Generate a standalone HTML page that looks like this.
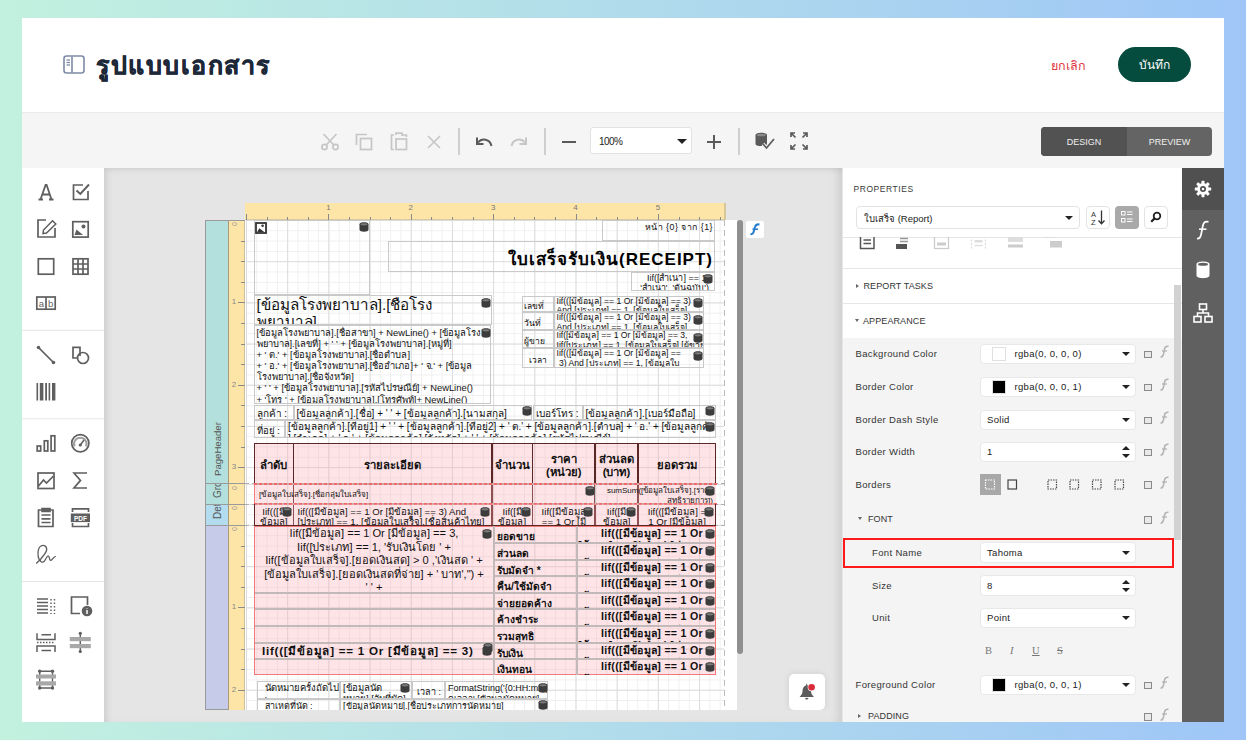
<!DOCTYPE html>
<html><head><meta charset="utf-8">
<style>
*{box-sizing:border-box;margin:0;padding:0}
html,body{width:1246px;height:740px;overflow:hidden}
body{font-family:"Liberation Sans",sans-serif;background:linear-gradient(90deg,#c2f1df 0%,#9fc6f7 100%);position:relative;color:#333}
.a{position:absolute}
.t{overflow:hidden;color:#111}
#card{left:22px;top:18px;width:1202px;height:704px;background:#fff;overflow:hidden}
#hdr{left:0;top:0;width:1202px;height:95px;background:#fff;border-bottom:1px solid #e9ecef}
#tb{left:0;top:95px;width:1202px;height:55px;background:#f5f5f5}
#tools{left:0;top:150px;width:82px;height:554px;background:#fff}
#surf{left:82px;top:150px;width:738px;height:554px;background:#e5e5e5;overflow:hidden}
#surfsh{left:0;top:0;width:738px;height:554px;box-shadow:inset 6px 4px 6px -3px rgba(0,0,0,.10), inset -8px 0 8px -4px rgba(0,0,0,.10);pointer-events:none}
#props{left:820px;top:150px;width:340px;height:554px;background:#fff}
#side{left:1160px;top:150px;width:42px;height:554px;background:#606060}
</style></head><body>
<div id="card" class="a">
  
  <div id="hdr" class="a">
    <svg class="a" style="left:41px;top:37px" width="22" height="19" viewBox="0 0 22 19"><rect x="1" y="1" width="20" height="17" rx="2.5" fill="none" stroke="#7d8ba6" stroke-width="1.6"/><line x1="9" y1="1.5" x2="9" y2="17.5" stroke="#7d8ba6" stroke-width="1.6"/><line x1="3.5" y1="5" x2="7" y2="5" stroke="#7d8ba6" stroke-width="1.3"/><line x1="3.5" y1="7.5" x2="7" y2="7.5" stroke="#7d8ba6" stroke-width="1.3"/><line x1="3.5" y1="10" x2="7" y2="10" stroke="#7d8ba6" stroke-width="1.3"/></svg>
    <div class="a" style="left:74px;top:27px;font-size:25px;font-weight:bold;color:#1d2939;letter-spacing:1.5px;-webkit-text-stroke:0.5px #1d2939">รูปแบบเอกสาร</div>
    <div class="a" style="left:1029px;top:38px;font-size:12.5px;color:#e0383e">ยกเลิก</div>
    <div class="a" style="left:1096px;top:29px;width:73px;height:35px;border-radius:18px;background:#054c3e;color:#fff;font-size:12px;text-align:center;line-height:36px">บันทึก</div>
  </div>
  
  <div id="tb" class="a">
    <svg class="a" style="left:299px;top:20px" width="18" height="18" viewBox="0 0 18 18" fill="none" stroke="#c6c6c6" stroke-width="1.7"><circle cx="3.5" cy="14" r="2.6"/><circle cx="14.5" cy="14" r="2.6"/><path d="M5.2 12 L15.5 1 M12.8 12 L2.5 1"/></svg>
    <svg class="a" style="left:333px;top:20px" width="18" height="18" viewBox="0 0 18 18" fill="none" stroke="#c6c6c6" stroke-width="1.7"><path d="M1.5 12 V1.5 H12"/><rect x="5.5" y="5.5" width="11" height="11"/></svg>
    <svg class="a" style="left:368px;top:18px" width="18" height="20" viewBox="0 0 18 20" fill="none" stroke="#c6c6c6" stroke-width="1.7"><path d="M4 4 H1.5 V18.5 H4"/><path d="M12 4 H16.5 V6"/><rect x="6" y="8" width="10.5" height="10.5"/><path d="M6 4 V2.2 H12 V5" /></svg>
    <svg class="a" style="left:405px;top:22px" width="14" height="14" viewBox="0 0 14 14" fill="none" stroke="#c6c6c6" stroke-width="1.6"><path d="M1 1 L13 13 M13 1 L1 13"/></svg>
    <div class="a" style="left:436px;top:15px;width:1.5px;height:27px;background:#cfcfcf"></div>
    <svg class="a" style="left:453px;top:23px" width="18" height="11" viewBox="0 0 18 11" fill="none" stroke="#5a5a5a" stroke-width="2"><path d="M16.5 10 C15 3 7 1.5 3 6.5"/><path d="M2 1.5 V8 H8.5" fill="none"/></svg>
    <svg class="a" style="left:488px;top:23px" width="18" height="11" viewBox="0 0 18 11" fill="none" stroke="#c6c6c6" stroke-width="2"><path d="M1.5 10 C3 3 11 1.5 15 6.5"/><path d="M16 1.5 V8 H9.5"/></svg>
    <div class="a" style="left:522px;top:15px;width:1.5px;height:27px;background:#cfcfcf"></div>
    <div class="a" style="left:540px;top:28px;width:14px;height:2px;background:#5a5a5a"></div>
    <div class="a" style="left:568px;top:14px;width:102px;height:27px;background:#fff;border:1px solid #e2e2e2;border-radius:3px"><div class="a" style="left:8px;top:8px;font-size:10px;color:#222;letter-spacing:-0.6px">100%</div><div class="a" style="left:86px;top:11px;width:0;height:0;border-left:5px solid transparent;border-right:5px solid transparent;border-top:5px solid #222"></div></div>
    <svg class="a" style="left:685px;top:22px" width="14" height="14" viewBox="0 0 14 14" fill="none" stroke="#5a5a5a" stroke-width="2"><path d="M7 0 V14 M0 7 H14"/></svg>
    <div class="a" style="left:716px;top:15px;width:1.5px;height:27px;background:#cfcfcf"></div>
    <svg class="a" style="left:733px;top:19px" width="20" height="18" viewBox="0 0 20 18"><path d="M0.5 3 C0.5 0 12 0 12 3 V12 C12 13.5 8 14 6 14 C3 14 0.5 13.5 0.5 12 Z" fill="#5a5a5a"/><ellipse cx="6.25" cy="3" rx="4.5" ry="1.3" fill="#8a8a8a"/><path d="M8 12 L11.5 16 L19 7" fill="none" stroke="#f4f4f4" stroke-width="3.5"/><path d="M8 12 L11.5 16 L19 7" fill="none" stroke="#5a5a5a" stroke-width="1.7"/></svg>
    <svg class="a" style="left:768px;top:19px" width="18" height="18" viewBox="0 0 18 18" fill="none" stroke="#5a5a5a" stroke-width="1.7"><path d="M1 5 V1 H5 M1 1 L5.5 5.5"/><path d="M13 1 H17 V5 M17 1 L12.5 5.5"/><path d="M1 13 V17 H5 M1 17 L5.5 12.5"/><path d="M17 13 V17 H13 M17 17 L12.5 12.5"/></svg>
    <div class="a" style="left:1019px;top:14px;width:171px;height:29px;border-radius:4px;background:#646464;overflow:hidden"><div class="a" style="left:0;top:0;width:86px;height:29px;background:#525252"></div><div class="a" style="left:0;top:10px;width:86px;text-align:center;font-size:9px;color:#f0f0f0">DESIGN</div><div class="a" style="left:86px;top:10px;width:85px;text-align:center;font-size:9px;color:#f0f0f0">PREVIEW</div></div>
  </div>
  
  <div id="tools" class="a">
   <svg class="a" style="left:0;top:0" width="82" height="554" viewBox="22 168 82 554">
    <g fill="none" stroke="#5f5f5f" stroke-width="1.7">
      <path d="M38.5 199.5 H43 M49 199.5 H53.5 M40.5 199.5 L45.6 185 L46.6 185 L51.5 199.5 M42.3 194.5 H49.8" stroke-width="1.8"/>
      <path d="M83 185 H73.5 V199.5 H88 V191" /><path d="M76.5 190.5 L80.3 194 L89 184.5" stroke-width="1.9"/>
      <path d="M46 220 H38 V237 H55 V228"/><path d="M52.5 220.8 L55.8 224 L46.5 233 L43 233.6 L43.5 230 Z" stroke-width="1.5"/>
      <rect x="72.8" y="221.7" width="15.4" height="15.4"/>
      <rect x="38.3" y="258.8" width="15.4" height="15.4"/>
      <rect x="73" y="258.8" width="15" height="15.4"/><path d="M78 259 V274 M83 259 V274 M73 264 H88 M73 269 H88"/>
      <rect x="36.8" y="297" width="18.4" height="12.2"/><path d="M46 297 V309.2"/>
      <path d="M38.5 347.5 L53.5 362.5"/>
      <path d="M80 356 V347.3 H73 V358 H77"/><circle cx="83" cy="358" r="5.5"/>
      <rect x="37.2" y="446" width="3.5" height="5"/><rect x="44.3" y="440.8" width="3.5" height="10.2"/><rect x="51.1" y="435.8" width="3.7" height="15.2"/>
      <circle cx="80.3" cy="443.2" r="8.6"/>
      <rect x="38" y="473" width="16" height="15.5"/><path d="M38.5 486 L43.5 480 L46.5 483 L53.5 476"/>
      <path d="M87 473 H74 L80.5 480.4 L74 488 H87"/>
      <path d="M41 510 H38.5 V526.5 H53 V510 H50.5"/><path d="M42 508.5 H50 V511.5 H42 Z" fill="#5f5f5f"/><path d="M41.5 515 H50.5 M41.5 518.8 H50.5 M41.5 522.5 H50.5"/>
      <path d="M72.5 512 V508.8 H88.5 V512 M72.5 523 V526.5 H88.5 V523"/>
      <path d="M36.2 563.5 L39.5 560.3 C37 556 37.5 548 41 546 C44 544.3 47.5 546.5 46.5 550.5 C45.8 553.5 42 557 40.5 559.5 C39.5 562 42.5 563.2 44.5 561 C46 559 47 555.5 48.3 555.8 C49.5 556 49.3 561 51 560.3 C52.5 559.8 53.5 556.5 55.8 556.3" stroke-width="1.3"/>
      <path d="M37 599 H48 M37 602.5 H48 M37 606 H48 M37 609.5 H48 M37 613 H48" stroke-width="1.3"/>
      <path d="M51 599 V614 M54.5 599 V614" stroke-dasharray="1.5 2" stroke-width="1.4"/>
      <path d="M80 613.5 H71.5 V597 H87.5 V605"/>
      <path d="M37 633.3 V639.6 H55 V633.3 M37 652 V646 H55 V652 M41.5 634.8 H51 M41.5 650.5 H51" stroke-width="1.5"/>
      <path d="M37 642.5 H55" stroke-dasharray="1.5 1.5" stroke-width="1.3"/>
      <path d="M80.3 633 V652" stroke-width="1.5"/>
      <path d="M39.7 671.2 H52.5 M39.7 688 H52.5 M39.7 671 V689 M52.5 671 V689" stroke-width="1.4"/>
    </g>
    <g fill="#5f5f5f">
      <path d="M74.5 235 L76.5 229.5 L83 235 Z"/><circle cx="83.5" cy="226.5" r="2"/>
      <text x="41.5" y="307" font-size="9.5" font-family="Liberation Sans" text-anchor="middle">a</text>
      <text x="50.6" y="307" font-size="9.5" font-family="Liberation Sans" text-anchor="middle">b</text>
      <circle cx="38.5" cy="347.5" r="1.8"/><circle cx="53.5" cy="362.5" r="1.8"/>
      <rect x="36.5" y="383" width="1.6" height="17.5"/><rect x="39.8" y="383" width="3.6" height="17.5"/><rect x="45.2" y="383" width="1.8" height="17.5"/><rect x="48.6" y="383" width="1.6" height="17.5"/><rect x="52" y="383" width="3.4" height="17.5"/>
      <rect x="70.8" y="513.5" width="19.2" height="8.6"/>
      <circle cx="87" cy="611" r="5.3"/>
      <rect x="69.8" y="637" width="21" height="4.2" fill="#a8a8a8"/><rect x="69.8" y="644" width="21" height="4.2" fill="#a8a8a8"/>
      <circle cx="80.3" cy="633.3" r="1.6"/><circle cx="80.3" cy="651.5" r="1.6"/>
      <rect x="36" y="674.5" width="20" height="4" fill="#a8a8a8"/><rect x="36" y="681.3" width="20" height="4.2" fill="#a8a8a8"/>
      <circle cx="39.7" cy="671.2" r="1.7"/><circle cx="52.5" cy="671.2" r="1.7"/><circle cx="39.7" cy="688" r="1.7"/><circle cx="52.5" cy="688" r="1.7"/>
    </g>
    <path d="M74.5 446.5 A6.3 6.3 0 1 1 86.1 446.5" fill="none" stroke="#a0a0a0" stroke-width="2"/>
    <path d="M80.3 445 L84 440" stroke="#5f5f5f" stroke-width="1.5"/><circle cx="80.3" cy="445" r="1.6" fill="#5f5f5f"/>
    <text x="80.4" y="520.6" font-size="6.5" font-weight="bold" font-family="Liberation Sans" text-anchor="middle" fill="#fff">PDF</text>
    <path d="M87 608.2 V608.8 M87 610 V614" stroke="#fff" stroke-width="1.5"/>
    <rect x="22" y="329.8" width="82" height="1" fill="#e4e4e4"/>
    <rect x="22" y="418.3" width="82" height="1" fill="#e4e4e4"/>
    <rect x="22" y="581" width="82" height="1" fill="#e4e4e4"/>
   </svg>
  </div>
  <div id="surf" class="a"><div class="a" style="left:-104px;top:-168px;width:840px;height:710px;overflow:hidden"><div class="a" style="left:245.0px;top:203.0px;width:481.0px;height:17.0px;background:#fde5a8;border-bottom:1px solid #d9c9a0"></div><div class="a" style="left:724.0px;top:203.0px;width:2.0px;height:17.0px;background:#d8c79a"></div><div class="a" style="left:246.0px;top:214.0px;width:1.0px;height:6.0px;background:#8a8a8a"></div><div class="a" style="left:266.6px;top:217.0px;width:1.0px;height:3.0px;background:#8a8a8a"></div><div class="a" style="left:287.2px;top:217.0px;width:1.0px;height:3.0px;background:#8a8a8a"></div><div class="a" style="left:307.8px;top:217.0px;width:1.0px;height:3.0px;background:#8a8a8a"></div><div class="a" style="left:328.4px;top:214.0px;width:1.0px;height:6.0px;background:#8a8a8a"></div><div class="a" style="left:349.0px;top:217.0px;width:1.0px;height:3.0px;background:#8a8a8a"></div><div class="a" style="left:369.6px;top:217.0px;width:1.0px;height:3.0px;background:#8a8a8a"></div><div class="a" style="left:390.2px;top:217.0px;width:1.0px;height:3.0px;background:#8a8a8a"></div><div class="a" style="left:410.8px;top:214.0px;width:1.0px;height:6.0px;background:#8a8a8a"></div><div class="a" style="left:431.4px;top:217.0px;width:1.0px;height:3.0px;background:#8a8a8a"></div><div class="a" style="left:452.0px;top:217.0px;width:1.0px;height:3.0px;background:#8a8a8a"></div><div class="a" style="left:472.6px;top:217.0px;width:1.0px;height:3.0px;background:#8a8a8a"></div><div class="a" style="left:493.2px;top:214.0px;width:1.0px;height:6.0px;background:#8a8a8a"></div><div class="a" style="left:513.8px;top:217.0px;width:1.0px;height:3.0px;background:#8a8a8a"></div><div class="a" style="left:534.4px;top:217.0px;width:1.0px;height:3.0px;background:#8a8a8a"></div><div class="a" style="left:555.0px;top:217.0px;width:1.0px;height:3.0px;background:#8a8a8a"></div><div class="a" style="left:575.6px;top:214.0px;width:1.0px;height:6.0px;background:#8a8a8a"></div><div class="a" style="left:596.2px;top:217.0px;width:1.0px;height:3.0px;background:#8a8a8a"></div><div class="a" style="left:616.8px;top:217.0px;width:1.0px;height:3.0px;background:#8a8a8a"></div><div class="a" style="left:637.4px;top:217.0px;width:1.0px;height:3.0px;background:#8a8a8a"></div><div class="a" style="left:658.0px;top:214.0px;width:1.0px;height:6.0px;background:#8a8a8a"></div><div class="a" style="left:678.6px;top:217.0px;width:1.0px;height:3.0px;background:#8a8a8a"></div><div class="a" style="left:699.2px;top:217.0px;width:1.0px;height:3.0px;background:#8a8a8a"></div><div class="a" style="left:719.8px;top:217.0px;width:1.0px;height:3.0px;background:#8a8a8a"></div><div class="a" style="left:323.4px;top:203px;width:10px;text-align:center;font-size:8px;color:#777">1</div><div class="a" style="left:405.8px;top:203px;width:10px;text-align:center;font-size:8px;color:#777">2</div><div class="a" style="left:488.2px;top:203px;width:10px;text-align:center;font-size:8px;color:#777">3</div><div class="a" style="left:570.6px;top:203px;width:10px;text-align:center;font-size:8px;color:#777">4</div><div class="a" style="left:653.0px;top:203px;width:10px;text-align:center;font-size:8px;color:#777">5</div><div class="a" style="left:205.0px;top:220.0px;width:24.0px;height:490.0px;background:#c5cbe8;border:1px solid #9a9a9a;border-right:1px solid #a89a7a"></div><div class="a" style="left:206.0px;top:221.0px;width:22.0px;height:262.0px;background:#b3e0dc"></div><div class="a" style="left:206.0px;top:484.0px;width:22.0px;height:20.0px;background:#b3e0dc"></div><div class="a" style="left:206.0px;top:504.0px;width:22.0px;height:21.0px;background:#b3dcee"></div><div class="a" style="left:211.5px;top:476px;transform-origin:0 0;transform:rotate(-90deg);font-size:9.6px;color:#555;white-space:nowrap">PageHeader</div><div class="a" style="left:206px;top:484px;width:22px;height:20px;overflow:hidden"><div class="a" style="left:6px;top:14px;transform-origin:0 0;transform:rotate(-90deg);font-size:10px;color:#555;white-space:nowrap">GroupHeader</div></div><div class="a" style="left:206px;top:504px;width:22px;height:21px;overflow:hidden"><div class="a" style="left:6px;top:14.5px;transform-origin:0 0;transform:rotate(-90deg);font-size:10px;color:#555;white-space:nowrap">Detail</div></div><div class="a" style="left:229.0px;top:220.0px;width:16.0px;height:490.0px;background:#fde5a8;border-right:1px solid #cdbf9c"></div><div class="a" style="left:241.0px;top:240.6px;width:4.0px;height:1.0px;background:#8a8a8a"></div><div class="a" style="left:241.0px;top:261.2px;width:4.0px;height:1.0px;background:#8a8a8a"></div><div class="a" style="left:241.0px;top:281.8px;width:4.0px;height:1.0px;background:#8a8a8a"></div><div class="a" style="left:238.0px;top:302.4px;width:7.0px;height:1.0px;background:#8a8a8a"></div><div class="a" style="left:230px;top:297.4px;width:8px;text-align:center;font-size:8px;color:#888">1</div><div class="a" style="left:241.0px;top:323.0px;width:4.0px;height:1.0px;background:#8a8a8a"></div><div class="a" style="left:241.0px;top:343.6px;width:4.0px;height:1.0px;background:#8a8a8a"></div><div class="a" style="left:241.0px;top:364.2px;width:4.0px;height:1.0px;background:#8a8a8a"></div><div class="a" style="left:238.0px;top:384.8px;width:7.0px;height:1.0px;background:#8a8a8a"></div><div class="a" style="left:230px;top:379.8px;width:8px;text-align:center;font-size:8px;color:#888">2</div><div class="a" style="left:241.0px;top:405.4px;width:4.0px;height:1.0px;background:#8a8a8a"></div><div class="a" style="left:241.0px;top:426.0px;width:4.0px;height:1.0px;background:#8a8a8a"></div><div class="a" style="left:241.0px;top:446.6px;width:4.0px;height:1.0px;background:#8a8a8a"></div><div class="a" style="left:238.0px;top:467.2px;width:7.0px;height:1.0px;background:#8a8a8a"></div><div class="a" style="left:230px;top:462.2px;width:8px;text-align:center;font-size:8px;color:#888">3</div><div class="a" style="left:231.0px;top:226.0px;transform-origin:0 0;transform:rotate(-90deg);font-size:7px;line-height:7px;color:#999">0</div><div class="a" style="left:231.0px;top:490.0px;transform-origin:0 0;transform:rotate(-90deg);font-size:7px;line-height:7px;color:#999">0</div><div class="a" style="left:241.0px;top:524.6px;width:4.0px;height:1.0px;background:#8a8a8a"></div><div class="a" style="left:231.0px;top:510.0px;transform-origin:0 0;transform:rotate(-90deg);font-size:7px;line-height:7px;color:#999">0</div><div class="a" style="left:241.0px;top:545.6px;width:4.0px;height:1.0px;background:#8a8a8a"></div><div class="a" style="left:241.0px;top:566.2px;width:4.0px;height:1.0px;background:#8a8a8a"></div><div class="a" style="left:241.0px;top:586.8px;width:4.0px;height:1.0px;background:#8a8a8a"></div><div class="a" style="left:238.0px;top:607.4px;width:7.0px;height:1.0px;background:#8a8a8a"></div><div class="a" style="left:230px;top:602.4px;width:8px;text-align:center;font-size:8px;color:#888">1</div><div class="a" style="left:241.0px;top:628.0px;width:4.0px;height:1.0px;background:#8a8a8a"></div><div class="a" style="left:241.0px;top:648.6px;width:4.0px;height:1.0px;background:#8a8a8a"></div><div class="a" style="left:241.0px;top:669.2px;width:4.0px;height:1.0px;background:#8a8a8a"></div><div class="a" style="left:238.0px;top:689.8px;width:7.0px;height:1.0px;background:#8a8a8a"></div><div class="a" style="left:230px;top:684.8px;width:8px;text-align:center;font-size:8px;color:#888">2</div><div class="a" style="left:231.0px;top:531.0px;transform-origin:0 0;transform:rotate(-90deg);font-size:7px;line-height:7px;color:#999">0</div><div class="a" style="left:205.0px;top:483.0px;width:40.0px;height:1.0px;background:#9a9a9a"></div><div class="a" style="left:205.0px;top:219.5px;width:40.0px;height:1.0px;background:#9a9a9a"></div><div class="a" style="left:205.0px;top:503.5px;width:40.0px;height:1.0px;background:#9a9a9a"></div><div class="a" style="left:205.0px;top:524.5px;width:40.0px;height:1.0px;background:#9a9a9a"></div><div class="a" style="left:245.0px;top:220.0px;width:492.0px;height:490.0px;background:#fff"></div><div class="a" style="left:246.0px;top:220.0px;width:478.0px;height:263.0px;background-image:linear-gradient(to right,#dcdcdc 1px,transparent 1px),linear-gradient(to bottom,#dcdcdc 1px,transparent 1px),linear-gradient(to right,#efefef 1px,transparent 1px),linear-gradient(to bottom,#efefef 1px,transparent 1px);background-size:41.2px 41.2px,41.2px 41.2px,10.3px 10.3px,10.3px 10.3px;"></div><div class="a" style="left:246.0px;top:484.0px;width:478.0px;height:20.0px;background-image:linear-gradient(to right,#dcdcdc 1px,transparent 1px),linear-gradient(to bottom,#dcdcdc 1px,transparent 1px),linear-gradient(to right,#efefef 1px,transparent 1px),linear-gradient(to bottom,#efefef 1px,transparent 1px);background-size:41.2px 41.2px,41.2px 41.2px,10.3px 10.3px,10.3px 10.3px;"></div><div class="a" style="left:246.0px;top:504.0px;width:478.0px;height:21.0px;background-image:linear-gradient(to right,#dcdcdc 1px,transparent 1px),linear-gradient(to bottom,#dcdcdc 1px,transparent 1px),linear-gradient(to right,#efefef 1px,transparent 1px),linear-gradient(to bottom,#efefef 1px,transparent 1px);background-size:41.2px 41.2px,41.2px 41.2px,10.3px 10.3px,10.3px 10.3px;"></div><div class="a" style="left:246.0px;top:525.0px;width:478.0px;height:185.0px;background-image:linear-gradient(to right,#dcdcdc 1px,transparent 1px),linear-gradient(to bottom,#dcdcdc 1px,transparent 1px),linear-gradient(to right,#efefef 1px,transparent 1px),linear-gradient(to bottom,#efefef 1px,transparent 1px);background-size:41.2px 41.2px,41.2px 41.2px,10.3px 10.3px,10.3px 10.3px;"></div><div class="a" style="left:724px;top:220px;width:1px;height:490px;background:repeating-linear-gradient(to bottom,#bdbdbd 0 6px,transparent 6px 10px)"></div><div class="a" style="left:245px;top:483px;width:480px;height:1px;background:repeating-linear-gradient(to right,#b0b0b0 0 4px,transparent 4px 7px)"></div><div class="a" style="left:245px;top:503.5px;width:480px;height:1px;background:repeating-linear-gradient(to right,#b0b0b0 0 4px,transparent 4px 7px)"></div><div class="a" style="left:245px;top:524.5px;width:480px;height:1px;background:repeating-linear-gradient(to right,#b0b0b0 0 4px,transparent 4px 7px)"></div><div class="a" style="left:736.5px;top:220.0px;width:6.5px;height:434.0px;background:#8f8f8f;border-radius:3px"></div><div class="a" style="left:746px;top:221px;width:18px;height:17px;background:#fff;border-radius:2px"></div><svg class="a" style="left:746px;top:221px" width="18" height="17" viewBox="746 221 18 17"><path d="M750.5 234 C752.5 234.5 753.5 233 754 230.5 L755 227 C755.5 224.5 757 224 759.5 224.5" fill="none" stroke="#2c7fd0" stroke-width="2.1"/><path d="M752.5 229.2 H758" stroke="#2c7fd0" stroke-width="1.6"/></svg><div class="a" style="left:788.5px;top:674px;width:36px;height:36px;background:#fff;border-radius:5px;box-shadow:0 0 7px rgba(0,0,0,0.10)"></div><svg class="a" style="left:796px;top:680px" width="22" height="22" viewBox="0 0 22 22"><path d="M3.6 17 C5.5 15 6.5 13.5 6.5 11 C6.5 7.8 8 5.8 10.3 5.2 V3.8 H11.2 V5.2 C13.5 5.8 15 7.8 15 11 C15 13.5 16 15 18 17 Z" fill="#5c5c5c"/><ellipse cx="10.75" cy="18.6" rx="1.7" ry="0.9" fill="#5c5c5c"/><circle cx="15.6" cy="7.3" r="3.9" fill="#fff"/><circle cx="15.6" cy="7.3" r="3.3" fill="#d92b3a"/></svg><div class="a" style="left:253.5px;top:220.0px;width:116.0px;height:74.5px;border:1px solid #c9c9c9;"></div><svg class="a" style="left:255px;top:222px" width="12" height="12" viewBox="0 0 12 12"><rect x="1" y="1" width="10" height="10" fill="#fff" stroke="#333" stroke-width="1.8"/><path d="M2.2 10 L4.3 6.3 L9.3 10 Z" fill="#333"/><circle cx="7.6" cy="3.8" r="1.3" fill="#333"/></svg><svg class="a" style="left:358.5px;top:222.0px" width="10" height="10" viewBox="0 0 10 10"><path d="M0.5 2.2 C0.5 -0.4 9.5 -0.4 9.5 2.2 V7.8 C9.5 10.4 0.5 10.4 0.5 7.8 Z" fill="#3c3c3c"/><ellipse cx="5" cy="2.3" rx="3.6" ry="1.1" fill="#7a7a7a"/></svg><div class="a t" style="left:601.5px;top:220.0px;width:113.5px;height:20.5px;border:1px solid #c9c9c9;text-align:right;padding:1px 1px 0 0;font-size:8.8px;line-height:10px;letter-spacing:0.5px">หน้า {0} จาก {1}</div><div class="a t" style="left:387.5px;top:241.0px;width:327.5px;height:31.0px;border:1px solid #c9c9c9;text-align:right;padding:5px 1px 0 0;font-size:17px;font-weight:bold;line-height:26px;color:#000;letter-spacing:1px">ใบเสร็จรับเงิน(RECEIPT)</div><div class="a t" style="left:631.0px;top:272.0px;width:84.0px;height:18.5px;border:1px solid #c9c9c9;text-align:right;padding:0 5px 0 8px;font-size:9px;line-height:10px">Iif([สำเนา] == 1, 'สำเนา', 'ต้นฉบับ')</div><svg class="a" style="left:703.0px;top:273.5px" width="10" height="10" viewBox="0 0 10 10"><path d="M0.5 2.2 C0.5 -0.4 9.5 -0.4 9.5 2.2 V7.8 C9.5 10.4 0.5 10.4 0.5 7.8 Z" fill="#3c3c3c"/><ellipse cx="5" cy="2.3" rx="3.6" ry="1.1" fill="#7a7a7a"/></svg><div class="a t" style="left:253.5px;top:295.0px;width:238.5px;height:30.0px;border:1px solid #c9c9c9;padding:0 3px 0 2px;font-size:15.2px;line-height:17px;color:#111;letter-spacing:0px">[ข้อมูลโรงพยาบาล].[ชื่อโรง พยาบาล]</div><svg class="a" style="left:481.0px;top:298.0px" width="10" height="10" viewBox="0 0 10 10"><path d="M0.5 2.2 C0.5 -0.4 9.5 -0.4 9.5 2.2 V7.8 C9.5 10.4 0.5 10.4 0.5 7.8 Z" fill="#3c3c3c"/><ellipse cx="5" cy="2.3" rx="3.6" ry="1.1" fill="#7a7a7a"/></svg><div class="a t" style="left:253.5px;top:325.0px;width:237.5px;height:79.0px;border:1px solid #c9c9c9;padding:1px 2px;font-size:9.4px;line-height:11.1px;white-space:nowrap">[ข้อมูลโรงพยาบาล].[ชื่อสาขา] + NewLine() + [ข้อมูลโรง<br>พยาบาล].[เลขที่] + ' ' + [ข้อมูลโรงพยาบาล].[หมู่ที่]<br>+ ' ต.' + [ข้อมูลโรงพยาบาล].[ชื่อตำบล]<br>+ ' อ.' + [ข้อมูลโรงพยาบาล].[ชื่ออำเภอ]+ ' จ.' + [ข้อมูล<br>โรงพยาบาล].[ชื่อจังหวัด]<br>+ ' ' + [ข้อมูลโรงพยาบาล].[รหัสไปรษณีย์] + NewLine()<br>+ 'โทร ' + [ข้อมูลโรงพยาบาล].[โทรศัพท์]+ NewLine()</div><svg class="a" style="left:481.0px;top:328.0px" width="10" height="10" viewBox="0 0 10 10"><path d="M0.5 2.2 C0.5 -0.4 9.5 -0.4 9.5 2.2 V7.8 C9.5 10.4 0.5 10.4 0.5 7.8 Z" fill="#3c3c3c"/><ellipse cx="5" cy="2.3" rx="3.6" ry="1.1" fill="#7a7a7a"/></svg><div class="a t" style="left:521.5px;top:295.5px;width:32.0px;height:16.5px;border:1px solid #c9c9c9;padding-left:1px;font-size:8.5px;line-height:18.5px">เลขที่</div><div class="a t" style="left:553.5px;top:295.5px;width:150.5px;height:16.5px;border:1px solid #c9c9c9;padding:0 2px;font-size:8.6px;line-height:9.5px;white-space:nowrap">Iif(([มีข้อมูล] == 1 Or [มีข้อมูล] == 3)<br>And [ประเภท] == 1, [ข้อมูลใบเสร็จ]</div><svg class="a" style="left:692.5px;top:298.0px" width="10" height="10" viewBox="0 0 10 10"><path d="M0.5 2.2 C0.5 -0.4 9.5 -0.4 9.5 2.2 V7.8 C9.5 10.4 0.5 10.4 0.5 7.8 Z" fill="#3c3c3c"/><ellipse cx="5" cy="2.3" rx="3.6" ry="1.1" fill="#7a7a7a"/></svg><div class="a t" style="left:521.5px;top:312.0px;width:32.0px;height:18.0px;border:1px solid #c9c9c9;padding-left:1px;font-size:8.5px;line-height:20px">วันที่</div><div class="a t" style="left:553.5px;top:312.0px;width:150.5px;height:18.0px;border:1px solid #c9c9c9;padding:0 2px;font-size:8.6px;line-height:9.5px;white-space:nowrap">Iif(([มีข้อมูล] == 1 Or [มีข้อมูล] == 3)<br>And [ประเภท] == 1, [ข้อมูลใบเสร็จ]</div><svg class="a" style="left:692.5px;top:314.5px" width="10" height="10" viewBox="0 0 10 10"><path d="M0.5 2.2 C0.5 -0.4 9.5 -0.4 9.5 2.2 V7.8 C9.5 10.4 0.5 10.4 0.5 7.8 Z" fill="#3c3c3c"/><ellipse cx="5" cy="2.3" rx="3.6" ry="1.1" fill="#7a7a7a"/></svg><div class="a t" style="left:521.5px;top:330.0px;width:32.0px;height:18.0px;border:1px solid #c9c9c9;padding-left:1px;font-size:8.5px;line-height:20px">ผู้ขาย</div><div class="a t" style="left:553.5px;top:330.0px;width:150.5px;height:18.0px;border:1px solid #c9c9c9;padding:0 2px;font-size:8.6px;line-height:9.5px;white-space:nowrap">Iif([มีข้อมูล] == 1 Or [มีข้อมูล] == 3,<br>Iif([ประเภท] == 1, [ข้อมูลใบเสร็จ].[ผู้ขาย]</div><svg class="a" style="left:692.5px;top:332.5px" width="10" height="10" viewBox="0 0 10 10"><path d="M0.5 2.2 C0.5 -0.4 9.5 -0.4 9.5 2.2 V7.8 C9.5 10.4 0.5 10.4 0.5 7.8 Z" fill="#3c3c3c"/><ellipse cx="5" cy="2.3" rx="3.6" ry="1.1" fill="#7a7a7a"/></svg><div class="a t" style="left:521.5px;top:348.0px;width:32.0px;height:20.0px;border:1px solid #c9c9c9;text-align:center;font-size:8.5px;line-height:22px">เวลา</div><div class="a t" style="left:553.5px;top:348.0px;width:150.5px;height:20.0px;border:1px solid #c9c9c9;padding:0 2px;font-size:8.6px;line-height:9.5px;white-space:nowrap">Iif(([มีข้อมูล] == 1 Or [มีข้อมูล] ==<br>&nbsp;3) And [ประเภท] == 1, [ข้อมูลใบ</div><svg class="a" style="left:692.5px;top:350.5px" width="10" height="10" viewBox="0 0 10 10"><path d="M0.5 2.2 C0.5 -0.4 9.5 -0.4 9.5 2.2 V7.8 C9.5 10.4 0.5 10.4 0.5 7.8 Z" fill="#3c3c3c"/><ellipse cx="5" cy="2.3" rx="3.6" ry="1.1" fill="#7a7a7a"/></svg><div class="a t" style="left:253.5px;top:404.5px;width:40.0px;height:15.5px;border:1px solid #c9c9c9;padding:1.5px 2px 0;font-size:10px;line-height:13px">ลูกค้า :</div><div class="a t" style="left:293.5px;top:404.5px;width:238.5px;height:15.5px;border:1px solid #c9c9c9;padding:1.5px 2px 0;font-size:10px;line-height:13px;white-space:nowrap">[ข้อมูลลูกค้า].[ชื่อ] + ' ' + [ข้อมูลลูกค้า].[นามสกุล]</div><svg class="a" style="left:521.5px;top:406.0px" width="10" height="10" viewBox="0 0 10 10"><path d="M0.5 2.2 C0.5 -0.4 9.5 -0.4 9.5 2.2 V7.8 C9.5 10.4 0.5 10.4 0.5 7.8 Z" fill="#3c3c3c"/><ellipse cx="5" cy="2.3" rx="3.6" ry="1.1" fill="#7a7a7a"/></svg><div class="a t" style="left:533.0px;top:404.5px;width:49.5px;height:15.5px;border:1px solid #c9c9c9;padding:1.5px 2px 0;font-size:10px;line-height:13px">เบอร์โทร :</div><div class="a t" style="left:582.5px;top:404.5px;width:133.0px;height:15.5px;border:1px solid #c9c9c9;padding:1.5px 2px 0;font-size:10px;line-height:13px;white-space:nowrap">[ข้อมูลลูกค้า].[เบอร์มือถือ]</div><svg class="a" style="left:704.5px;top:406.0px" width="10" height="10" viewBox="0 0 10 10"><path d="M0.5 2.2 C0.5 -0.4 9.5 -0.4 9.5 2.2 V7.8 C9.5 10.4 0.5 10.4 0.5 7.8 Z" fill="#3c3c3c"/><ellipse cx="5" cy="2.3" rx="3.6" ry="1.1" fill="#7a7a7a"/></svg><div class="a t" style="left:253.5px;top:420.0px;width:31.5px;height:17.5px;border:1px solid #c9c9c9;padding:3px 0 0 2px;font-size:9.6px;line-height:13px;white-space:nowrap">ที่อยู่ :</div><div class="a t" style="left:285.0px;top:420.0px;width:430.5px;height:17.5px;border:1px solid #c9c9c9;padding:0 2px;font-size:10px;line-height:12px;white-space:nowrap">[ข้อมูลลูกค้า].[ที่อยู่1] + ' ' + [ข้อมูลลูกค้า].[ที่อยู่2] + ' ต.' + [ข้อมูลลูกค้า].[ตำบล] + ' อ.' + [ข้อมูลลูกค้า<br>].[อำเภอ] + ' จ.' + [ข้อมูลลูกค้า].[จังหวัด] + ' ' + [ข้อมูลลูกค้า].[รหัสไปรษณีย์]</div><svg class="a" style="left:704.5px;top:422.0px" width="10" height="10" viewBox="0 0 10 10"><path d="M0.5 2.2 C0.5 -0.4 9.5 -0.4 9.5 2.2 V7.8 C9.5 10.4 0.5 10.4 0.5 7.8 Z" fill="#3c3c3c"/><ellipse cx="5" cy="2.3" rx="3.6" ry="1.1" fill="#7a7a7a"/></svg><div class="a" style="left:253.5px;top:442.5px;width:462.5px;height:41.5px;background:rgba(255,170,180,0.32);border:1.5px solid #5b2626;border-bottom:none"></div><div class="a" style="left:292.8px;top:442.5px;width:1.5px;height:83.0px;background:#5b2626"></div><div class="a" style="left:491.2px;top:442.5px;width:1.5px;height:83.0px;background:#5b2626"></div><div class="a" style="left:531.8px;top:442.5px;width:1.5px;height:83.0px;background:#5b2626"></div><div class="a" style="left:594.2px;top:442.5px;width:1.5px;height:83.0px;background:#5b2626"></div><div class="a" style="left:637.2px;top:442.5px;width:1.5px;height:83.0px;background:#5b2626"></div><div class="a t" style="left:253.5px;top:443.0px;width:40.0px;height:40.0px;text-align:center;font-weight:bold;font-size:11.3px;color:#111;line-height:44px">ลำดับ</div><div class="a t" style="left:293.5px;top:443.0px;width:198.5px;height:40.0px;text-align:center;font-weight:bold;font-size:11.3px;color:#111;line-height:44px">รายละเอียด</div><div class="a t" style="left:492.0px;top:443.0px;width:40.5px;height:40.0px;text-align:center;font-weight:bold;font-size:11.3px;color:#111;line-height:44px">จำนวน</div><div class="a t" style="left:532.5px;top:443.0px;width:62.5px;height:40.0px;text-align:center;font-weight:bold;font-size:11.3px;color:#111;padding-top:9.5px;line-height:13.5px">ราคา<br>(หน่วย)</div><div class="a t" style="left:595.0px;top:443.0px;width:43.0px;height:40.0px;text-align:center;font-weight:bold;font-size:11.3px;color:#111;padding-top:9.5px;line-height:13.5px">ส่วนลด<br>(บาท)</div><div class="a t" style="left:638.0px;top:443.0px;width:78.0px;height:40.0px;text-align:center;font-weight:bold;font-size:11.3px;color:#111;line-height:44px">ยอดรวม</div><div class="a" style="left:253.5px;top:483.5px;width:462.5px;height:20.5px;background:rgba(255,170,180,0.32);border-left:1px solid #f08080"></div><div class="a" style="left:253.5px;top:483px;width:463px;height:2px;background:repeating-linear-gradient(to right,#f06868 0 3px,#c9a9a9 3px 5px)"></div><div class="a" style="left:253.5px;top:503px;width:463px;height:2px;background:repeating-linear-gradient(to right,#f06868 0 3px,#c9a9a9 3px 5px)"></div><div class="a t" style="left:256.0px;top:485.0px;width:338.0px;height:18.0px;padding:5px 0 0 3px;font-size:8.1px;line-height:9px;white-space:nowrap">[ข้อมูลใบเสร็จ].[ชื่อกลุ่มใบเสร็จ]</div><svg class="a" style="left:584.5px;top:486.0px" width="10" height="10" viewBox="0 0 10 10"><path d="M0.5 2.2 C0.5 -0.4 9.5 -0.4 9.5 2.2 V7.8 C9.5 10.4 0.5 10.4 0.5 7.8 Z" fill="#3c3c3c"/><ellipse cx="5" cy="2.3" rx="3.6" ry="1.1" fill="#7a7a7a"/></svg><div class="a t" style="left:598.0px;top:485.0px;width:116.0px;height:18.0px;text-align:right;padding-right:1px;font-size:8px;line-height:9.5px;white-space:nowrap;padding-top:1px">sumSum([ข้อมูลใบเสร็จ].[ราคา<br>สุทธิรายการ])</div><svg class="a" style="left:705.0px;top:486.0px" width="10" height="10" viewBox="0 0 10 10"><path d="M0.5 2.2 C0.5 -0.4 9.5 -0.4 9.5 2.2 V7.8 C9.5 10.4 0.5 10.4 0.5 7.8 Z" fill="#3c3c3c"/><ellipse cx="5" cy="2.3" rx="3.6" ry="1.1" fill="#7a7a7a"/></svg><div class="a" style="left:594.5px;top:484.0px;width:1.0px;height:20.0px;background:#c8c8c8"></div><div class="a" style="left:253.5px;top:504.0px;width:462.5px;height:21.5px;background:rgba(255,170,180,0.32);border-left:1.5px solid #5b2626;border-right:1.5px solid #5b2626"></div><div class="a" style="left:253.5px;top:524.5px;width:462.5px;height:1.5px;background:#5b2626"></div><div class="a t" style="left:253.5px;top:505.0px;width:40.0px;height:19.5px;text-align:center;padding:2px 4px 0;font-size:9.6px;line-height:10px;white-space:nowrap">Iif(([มี<br>ข้อมูล]</div><svg class="a" style="left:281.5px;top:507.0px" width="10" height="10" viewBox="0 0 10 10"><path d="M0.5 2.2 C0.5 -0.4 9.5 -0.4 9.5 2.2 V7.8 C9.5 10.4 0.5 10.4 0.5 7.8 Z" fill="#3c3c3c"/><ellipse cx="5" cy="2.3" rx="3.6" ry="1.1" fill="#7a7a7a"/></svg><div class="a t" style="left:293.5px;top:505.0px;width:198.5px;height:19.5px;text-align:left;padding:2px 4px 0;font-size:9.6px;line-height:10px;white-space:nowrap">Iif(([มีข้อมูล] == 1 Or [มีข้อมูล] == 3) And<br>[ประเภท] == 1, [ข้อมูลใบเสร็จ].[ชื่อสินค้าไทย]</div><svg class="a" style="left:480.0px;top:507.0px" width="10" height="10" viewBox="0 0 10 10"><path d="M0.5 2.2 C0.5 -0.4 9.5 -0.4 9.5 2.2 V7.8 C9.5 10.4 0.5 10.4 0.5 7.8 Z" fill="#3c3c3c"/><ellipse cx="5" cy="2.3" rx="3.6" ry="1.1" fill="#7a7a7a"/></svg><div class="a t" style="left:492.0px;top:505.0px;width:40.5px;height:19.5px;text-align:center;padding:2px 4px 0;font-size:9.6px;line-height:10px;white-space:nowrap">Iif([มี<br>ข้อมูล]</div><svg class="a" style="left:520.5px;top:507.0px" width="10" height="10" viewBox="0 0 10 10"><path d="M0.5 2.2 C0.5 -0.4 9.5 -0.4 9.5 2.2 V7.8 C9.5 10.4 0.5 10.4 0.5 7.8 Z" fill="#3c3c3c"/><ellipse cx="5" cy="2.3" rx="3.6" ry="1.1" fill="#7a7a7a"/></svg><div class="a t" style="left:532.5px;top:505.0px;width:62.5px;height:19.5px;text-align:center;padding:2px 4px 0;font-size:9.6px;line-height:10px;white-space:nowrap">Iif([มีข้อมูล<br>== 1 Or [มี</div><svg class="a" style="left:583.0px;top:507.0px" width="10" height="10" viewBox="0 0 10 10"><path d="M0.5 2.2 C0.5 -0.4 9.5 -0.4 9.5 2.2 V7.8 C9.5 10.4 0.5 10.4 0.5 7.8 Z" fill="#3c3c3c"/><ellipse cx="5" cy="2.3" rx="3.6" ry="1.1" fill="#7a7a7a"/></svg><div class="a t" style="left:595.0px;top:505.0px;width:43.0px;height:19.5px;text-align:center;padding:2px 4px 0;font-size:9.6px;line-height:10px;white-space:nowrap">Iif([มี<br>ข้อมูล]</div><svg class="a" style="left:626.0px;top:507.0px" width="10" height="10" viewBox="0 0 10 10"><path d="M0.5 2.2 C0.5 -0.4 9.5 -0.4 9.5 2.2 V7.8 C9.5 10.4 0.5 10.4 0.5 7.8 Z" fill="#3c3c3c"/><ellipse cx="5" cy="2.3" rx="3.6" ry="1.1" fill="#7a7a7a"/></svg><div class="a t" style="left:638.0px;top:505.0px;width:78.0px;height:19.5px;text-align:center;padding:2px 4px 0;font-size:9.6px;line-height:10px;white-space:nowrap">Iif(([มีข้อมูล] =<br>1 Or [มีข้อมูล]</div><svg class="a" style="left:704.0px;top:507.0px" width="10" height="10" viewBox="0 0 10 10"><path d="M0.5 2.2 C0.5 -0.4 9.5 -0.4 9.5 2.2 V7.8 C9.5 10.4 0.5 10.4 0.5 7.8 Z" fill="#3c3c3c"/><ellipse cx="5" cy="2.3" rx="3.6" ry="1.1" fill="#7a7a7a"/></svg><div class="a" style="left:254.0px;top:526.0px;width:239.5px;height:148.5px;background:rgba(255,170,180,0.32);border:1px solid #f07a7a;border-right:none"></div><div class="a" style="left:255.0px;top:591.5px;width:238.5px;height:2.0px;background:#c2b9ba"></div><div class="a" style="left:255.0px;top:608.0px;width:238.5px;height:2.0px;background:#c2b9ba"></div><div class="a" style="left:255.0px;top:624.5px;width:238.5px;height:2.0px;background:#c2b9ba"></div><div class="a" style="left:255.0px;top:641.5px;width:238.5px;height:2.0px;background:#c2b9ba"></div><div class="a" style="left:255.0px;top:658.0px;width:238.5px;height:2.0px;background:#c2b9ba"></div><div class="a t" style="left:255.0px;top:527.0px;width:238.0px;height:65.0px;text-align:center;font-size:11.1px;line-height:13.6px;padding-top:0px;white-space:nowrap;color:#111">Iif([มีข้อมูล] == 1 Or [มีข้อมูล] == 3,<br>Iif([ประเภท] == 1, 'รับเงินโดย ' +<br>Iif([ข้อมูลใบเสร็จ].[ยอดเงินสด] > 0 ,'เงินสด ' +<br>[ข้อมูลใบเสร็จ].[ยอดเงินสดที่จ่าย] + ' บาท',") +<br>' ' +</div><svg class="a" style="left:481.5px;top:529.0px" width="10" height="10" viewBox="0 0 10 10"><path d="M0.5 2.2 C0.5 -0.4 9.5 -0.4 9.5 2.2 V7.8 C9.5 10.4 0.5 10.4 0.5 7.8 Z" fill="#3c3c3c"/><ellipse cx="5" cy="2.3" rx="3.6" ry="1.1" fill="#7a7a7a"/></svg><div class="a t" style="left:256.0px;top:643.0px;width:224.0px;height:16.0px;padding-left:6px;font-weight:bold;font-size:11.6px;line-height:16px;white-space:nowrap;color:#111;letter-spacing:0.75px">Iif(([มีข้อมูล] == 1 Or [มีข้อมูล] == 3)</div><svg class="a" style="left:481.5px;top:646.0px" width="10" height="10" viewBox="0 0 10 10"><path d="M0.5 2.2 C0.5 -0.4 9.5 -0.4 9.5 2.2 V7.8 C9.5 10.4 0.5 10.4 0.5 7.8 Z" fill="#3c3c3c"/><ellipse cx="5" cy="2.3" rx="3.6" ry="1.1" fill="#7a7a7a"/></svg><div class="a" style="left:493.5px;top:526.0px;width:222.5px;height:148.5px;background:rgba(255,170,180,0.32);border:1px solid #f07a7a;border-left:none"></div><div class="a" style="left:492.5px;top:526.0px;width:2.0px;height:148.5px;background:#c2b9ba"></div><div class="a" style="left:575.5px;top:526.0px;width:2.0px;height:148.5px;background:#c2b9ba"></div><div class="a t" style="left:496.0px;top:525.5px;width:79.0px;height:17.5px;padding:5px 0 0 1px;font-weight:bold;font-size:10.2px;line-height:12px;white-space:nowrap;color:#111">ยอดขาย</div><div class="a t" style="left:578.0px;top:525.5px;width:126.0px;height:17.5px;text-align:right;padding:1px 1px 0 0;font-weight:bold;font-size:10.6px;line-height:12.5px;white-space:nowrap;color:#111;letter-spacing:0.3px">Iif(([มีข้อมูล] == 1 Or<br>[ข้อมูล] == 3) And [ประเภท]</div><svg class="a" style="left:704.5px;top:528.5px" width="10" height="10" viewBox="0 0 10 10"><path d="M0.5 2.2 C0.5 -0.4 9.5 -0.4 9.5 2.2 V7.8 C9.5 10.4 0.5 10.4 0.5 7.8 Z" fill="#3c3c3c"/><ellipse cx="5" cy="2.3" rx="3.6" ry="1.1" fill="#7a7a7a"/></svg><div class="a" style="left:494.5px;top:542.0px;width:220.5px;height:2.0px;background:#c2b9ba"></div><div class="a t" style="left:496.0px;top:543.0px;width:79.0px;height:16.5px;padding:5px 0 0 1px;font-weight:bold;font-size:10.2px;line-height:12px;white-space:nowrap;color:#111">ส่วนลด</div><div class="a t" style="left:578.0px;top:543.0px;width:126.0px;height:16.5px;text-align:right;padding:1px 1px 0 0;font-weight:bold;font-size:10.6px;line-height:12.5px;white-space:nowrap;color:#111;letter-spacing:0.3px">Iif(([มีข้อมูล] == 1 Or<br>[ข้อมูล] == 3) And [ประเภท]</div><svg class="a" style="left:704.5px;top:546.0px" width="10" height="10" viewBox="0 0 10 10"><path d="M0.5 2.2 C0.5 -0.4 9.5 -0.4 9.5 2.2 V7.8 C9.5 10.4 0.5 10.4 0.5 7.8 Z" fill="#3c3c3c"/><ellipse cx="5" cy="2.3" rx="3.6" ry="1.1" fill="#7a7a7a"/></svg><div class="a" style="left:494.5px;top:558.5px;width:220.5px;height:2.0px;background:#c2b9ba"></div><div class="a t" style="left:496.0px;top:559.5px;width:79.0px;height:16.5px;padding:5px 0 0 1px;font-weight:bold;font-size:10.2px;line-height:12px;white-space:nowrap;color:#111">รับมัดจำ *</div><div class="a t" style="left:578.0px;top:559.5px;width:126.0px;height:16.5px;text-align:right;padding:1px 1px 0 0;font-weight:bold;font-size:10.6px;line-height:12.5px;white-space:nowrap;color:#111;letter-spacing:0.3px">Iif(([มีข้อมูล] == 1 Or<br>[ข้อมูล] == 3) And [ประเภท]</div><svg class="a" style="left:704.5px;top:562.5px" width="10" height="10" viewBox="0 0 10 10"><path d="M0.5 2.2 C0.5 -0.4 9.5 -0.4 9.5 2.2 V7.8 C9.5 10.4 0.5 10.4 0.5 7.8 Z" fill="#3c3c3c"/><ellipse cx="5" cy="2.3" rx="3.6" ry="1.1" fill="#7a7a7a"/></svg><div class="a" style="left:494.5px;top:575.0px;width:220.5px;height:2.0px;background:#c2b9ba"></div><div class="a t" style="left:496.0px;top:576.0px;width:79.0px;height:16.5px;padding:5px 0 0 1px;font-weight:bold;font-size:10.2px;line-height:12px;white-space:nowrap;color:#111">คืน/ใช้มัดจำ</div><div class="a t" style="left:578.0px;top:576.0px;width:126.0px;height:16.5px;text-align:right;padding:1px 1px 0 0;font-weight:bold;font-size:10.6px;line-height:12.5px;white-space:nowrap;color:#111;letter-spacing:0.3px">Iif(([มีข้อมูล] == 1 Or<br>[ข้อมูล] == 3) And [ประเภท]</div><svg class="a" style="left:704.5px;top:579.0px" width="10" height="10" viewBox="0 0 10 10"><path d="M0.5 2.2 C0.5 -0.4 9.5 -0.4 9.5 2.2 V7.8 C9.5 10.4 0.5 10.4 0.5 7.8 Z" fill="#3c3c3c"/><ellipse cx="5" cy="2.3" rx="3.6" ry="1.1" fill="#7a7a7a"/></svg><div class="a" style="left:494.5px;top:591.5px;width:220.5px;height:2.0px;background:#c2b9ba"></div><div class="a t" style="left:496.0px;top:592.5px;width:79.0px;height:16.5px;padding:5px 0 0 1px;font-weight:bold;font-size:10.2px;line-height:12px;white-space:nowrap;color:#111">จ่ายยอดค้าง</div><div class="a t" style="left:578.0px;top:592.5px;width:126.0px;height:16.5px;text-align:right;padding:1px 1px 0 0;font-weight:bold;font-size:10.6px;line-height:12.5px;white-space:nowrap;color:#111;letter-spacing:0.3px">Iif(([มีข้อมูล] == 1 Or<br>[ข้อมูล] == 3) And [ประเภท]</div><svg class="a" style="left:704.5px;top:595.5px" width="10" height="10" viewBox="0 0 10 10"><path d="M0.5 2.2 C0.5 -0.4 9.5 -0.4 9.5 2.2 V7.8 C9.5 10.4 0.5 10.4 0.5 7.8 Z" fill="#3c3c3c"/><ellipse cx="5" cy="2.3" rx="3.6" ry="1.1" fill="#7a7a7a"/></svg><div class="a" style="left:494.5px;top:608.0px;width:220.5px;height:2.0px;background:#c2b9ba"></div><div class="a t" style="left:496.0px;top:609.0px;width:79.0px;height:16.5px;padding:5px 0 0 1px;font-weight:bold;font-size:10.2px;line-height:12px;white-space:nowrap;color:#111">ค้างชำระ</div><div class="a t" style="left:578.0px;top:609.0px;width:126.0px;height:16.5px;text-align:right;padding:1px 1px 0 0;font-weight:bold;font-size:10.6px;line-height:12.5px;white-space:nowrap;color:#111;letter-spacing:0.3px">Iif(([มีข้อมูล] == 1 Or<br>[ข้อมูล] == 3) And [ประเภท]</div><svg class="a" style="left:704.5px;top:612.0px" width="10" height="10" viewBox="0 0 10 10"><path d="M0.5 2.2 C0.5 -0.4 9.5 -0.4 9.5 2.2 V7.8 C9.5 10.4 0.5 10.4 0.5 7.8 Z" fill="#3c3c3c"/><ellipse cx="5" cy="2.3" rx="3.6" ry="1.1" fill="#7a7a7a"/></svg><div class="a" style="left:494.5px;top:624.5px;width:220.5px;height:2.0px;background:#c2b9ba"></div><div class="a t" style="left:496.0px;top:625.5px;width:79.0px;height:17.0px;padding:5px 0 0 1px;font-weight:bold;font-size:10.2px;line-height:12px;white-space:nowrap;color:#111">รวมสุทธิ</div><div class="a t" style="left:578.0px;top:625.5px;width:126.0px;height:17.0px;text-align:right;padding:1px 1px 0 0;font-weight:bold;font-size:10.6px;line-height:12.5px;white-space:nowrap;color:#111;letter-spacing:0.3px">Iif(([มีข้อมูล] == 1 Or<br>[ข้อมูล] == 3) And [ประเภท]</div><svg class="a" style="left:704.5px;top:628.5px" width="10" height="10" viewBox="0 0 10 10"><path d="M0.5 2.2 C0.5 -0.4 9.5 -0.4 9.5 2.2 V7.8 C9.5 10.4 0.5 10.4 0.5 7.8 Z" fill="#3c3c3c"/><ellipse cx="5" cy="2.3" rx="3.6" ry="1.1" fill="#7a7a7a"/></svg><div class="a" style="left:494.5px;top:641.5px;width:220.5px;height:2.0px;background:#c2b9ba"></div><div class="a t" style="left:496.0px;top:642.5px;width:79.0px;height:16.5px;padding:5px 0 0 1px;font-weight:bold;font-size:10.2px;line-height:12px;white-space:nowrap;color:#111">รับเงิน</div><div class="a t" style="left:578.0px;top:642.5px;width:126.0px;height:16.5px;text-align:right;padding:1px 1px 0 0;font-weight:bold;font-size:10.6px;line-height:12.5px;white-space:nowrap;color:#111;letter-spacing:0.3px">Iif(([มีข้อมูล] == 1 Or<br>[ข้อมูล] == 3) And [ประเภท]</div><svg class="a" style="left:704.5px;top:645.5px" width="10" height="10" viewBox="0 0 10 10"><path d="M0.5 2.2 C0.5 -0.4 9.5 -0.4 9.5 2.2 V7.8 C9.5 10.4 0.5 10.4 0.5 7.8 Z" fill="#3c3c3c"/><ellipse cx="5" cy="2.3" rx="3.6" ry="1.1" fill="#7a7a7a"/></svg><div class="a" style="left:494.5px;top:658.0px;width:220.5px;height:2.0px;background:#c2b9ba"></div><div class="a t" style="left:496.0px;top:659.0px;width:79.0px;height:15.5px;padding:5px 0 0 1px;font-weight:bold;font-size:10.2px;line-height:12px;white-space:nowrap;color:#111">เงินทอน</div><div class="a t" style="left:578.0px;top:659.0px;width:126.0px;height:15.5px;text-align:right;padding:1px 1px 0 0;font-weight:bold;font-size:10.6px;line-height:12.5px;white-space:nowrap;color:#111;letter-spacing:0.3px">Iif(([มีข้อมูล] == 1 Or<br>[ข้อมูล] == 3) And [ประเภท]</div><svg class="a" style="left:704.5px;top:662.0px" width="10" height="10" viewBox="0 0 10 10"><path d="M0.5 2.2 C0.5 -0.4 9.5 -0.4 9.5 2.2 V7.8 C9.5 10.4 0.5 10.4 0.5 7.8 Z" fill="#3c3c3c"/><ellipse cx="5" cy="2.3" rx="3.6" ry="1.1" fill="#7a7a7a"/></svg><svg class="a" style="left:483.0px;top:643.0px" width="10" height="10" viewBox="0 0 10 10"><path d="M0.5 2.2 C0.5 -0.4 9.5 -0.4 9.5 2.2 V7.8 C9.5 10.4 0.5 10.4 0.5 7.8 Z" fill="#3c3c3c"/><ellipse cx="5" cy="2.3" rx="3.6" ry="1.1" fill="#7a7a7a"/></svg><div class="a t" style="left:256.5px;top:680.5px;width:83.5px;height:18.0px;border:1px solid #c9c9c9;padding:0px 0 0 7px;font-size:9.5px;line-height:11px;white-space:nowrap">นัดหมายครั้งถัดไป<br>:</div><div class="a t" style="left:340.0px;top:680.5px;width:71.5px;height:18.0px;border:1px solid #c9c9c9;padding:0px 2px 0;font-size:9.5px;line-height:11px;white-space:nowrap">[ข้อมูลนัด<br>หมาย].[วันที่นัด]</div><svg class="a" style="left:399.5px;top:683.0px" width="10" height="10" viewBox="0 0 10 10"><path d="M0.5 2.2 C0.5 -0.4 9.5 -0.4 9.5 2.2 V7.8 C9.5 10.4 0.5 10.4 0.5 7.8 Z" fill="#3c3c3c"/><ellipse cx="5" cy="2.3" rx="3.6" ry="1.1" fill="#7a7a7a"/></svg><div class="a t" style="left:411.5px;top:680.5px;width:33.5px;height:18.0px;border:1px solid #c9c9c9;text-align:right;padding:5px 3px 0 0;font-size:9px;line-height:11px">เวลา :</div><div class="a t" style="left:445.0px;top:680.5px;width:103.0px;height:18.0px;border:1px solid #c9c9c9;padding:1px 2px 0;font-size:9px;line-height:11px;white-space:nowrap">FormatString('{0:HH:mm}',<br>ดูเวลา',[ข้อมูลนัดหมาย]</div><svg class="a" style="left:537.5px;top:683.0px" width="10" height="10" viewBox="0 0 10 10"><path d="M0.5 2.2 C0.5 -0.4 9.5 -0.4 9.5 2.2 V7.8 C9.5 10.4 0.5 10.4 0.5 7.8 Z" fill="#3c3c3c"/><ellipse cx="5" cy="2.3" rx="3.6" ry="1.1" fill="#7a7a7a"/></svg><div class="a t" style="left:256.5px;top:698.5px;width:83.5px;height:13.5px;border:1px solid #c9c9c9;padding:1px 0 0 7px;font-size:9px;line-height:11px;white-space:nowrap">สาเหตุที่นัด :</div><div class="a t" style="left:340.0px;top:698.5px;width:208.0px;height:13.5px;border:1px solid #c9c9c9;padding:1px 2px 0;font-size:9px;line-height:11px;white-space:nowrap">[ข้อมูลนัดหมาย].[ชื่อประเภทการนัดหมาย]</div><svg class="a" style="left:537.5px;top:700.0px" width="10" height="10" viewBox="0 0 10 10"><path d="M0.5 2.2 C0.5 -0.4 9.5 -0.4 9.5 2.2 V7.8 C9.5 10.4 0.5 10.4 0.5 7.8 Z" fill="#3c3c3c"/><ellipse cx="5" cy="2.3" rx="3.6" ry="1.1" fill="#7a7a7a"/></svg></div><div id="surfsh" class="a"></div></div>
  <div id="props" class="a"><div class="a" style="left:-842px;top:-168px;width:1182px;height:722px"><div class="a" style="left:842.0px;top:168.0px;width:340.0px;height:554.0px;background:#fff"></div><div class="a" style="left:842.0px;top:337.5px;width:340.0px;height:384.5px;background:#f4f4f4"></div><div class="a" style="left:842.0px;top:168.0px;width:1.0px;height:554.0px;background:#e6e6e6"></div><div class="a" style="left:853.5px;top:183.5px;white-space:nowrap;font-size:8.5px;letter-spacing:0.55px;color:#3a3a3a">PROPERTIES</div><div class="a" style="left:855.5px;top:205.5px;width:224.5px;height:23.5px;background:#fff;border:1px solid #e3e3e3;border-radius:4px"></div><div class="a" style="left:864.0px;top:211.0px;white-space:nowrap;font-size:9.5px;color:#222">ใบเสร็จ (Report)</div><div class="a" style="left:1065px;top:216px;width:0;height:0;border-left:4.5px solid transparent;border-right:4.5px solid transparent;border-top:4.5px solid #222"></div><div class="a" style="left:1086.0px;top:205.5px;width:24.0px;height:23.5px;background:#fff;border:1px solid #e3e3e3;border-radius:4px"></div><svg class="a" style="left:1090px;top:209px" width="16" height="17" viewBox="0 0 16 17"><text x="1" y="7.5" font-size="7.5" font-family="Liberation Sans" fill="#333">A</text><text x="1" y="15.5" font-size="7.5" font-family="Liberation Sans" fill="#333">Z</text><path d="M11.5 1.5 V14.5 M8.5 11.5 L11.5 14.8 L14.5 11.5" fill="none" stroke="#333" stroke-width="1.3"/></svg><div class="a" style="left:1115.0px;top:205.5px;width:23.5px;height:23.5px;background:#a9a9a9;border-radius:4px"></div><svg class="a" style="left:1120px;top:210px" width="14" height="14" viewBox="0 0 14 14" fill="none" stroke="#fff" stroke-width="1"><rect x="1.5" y="1.5" width="3.5" height="3.5"/><rect x="1.5" y="8.5" width="3.5" height="3.5"/><path d="M7 2 H12.5 M7 4.5 H12.5 M7 9 H12.5 M7 11.5 H12.5"/></svg><div class="a" style="left:1144.0px;top:205.5px;width:24.0px;height:23.5px;background:#fff;border:1px solid #e3e3e3;border-radius:4px"></div><svg class="a" style="left:1150px;top:211px" width="12" height="12" viewBox="0 0 12 12"><circle cx="7" cy="5" r="3.3" fill="none" stroke="#222" stroke-width="1.8"/><path d="M4.6 7.4 L1.2 10.8" stroke="#222" stroke-width="2.2"/></svg><div class="a" style="left:842.0px;top:237.0px;width:340.0px;height:1.0px;background:#e6e6e6"></div><svg class="a" style="left:855px;top:237px" width="215" height="13" viewBox="855 237 215 13"><rect x="860.5" y="236" width="13.5" height="12.5" fill="none" stroke="#555" stroke-width="1.5"/><path d="M863.5 240 H871 M863.5 243.5 H871" stroke="#555" stroke-width="1.5"/><rect x="896" y="244" width="11" height="5" fill="#555"/><path d="M900 238.5 H908 M900 241.5 H908" stroke="#999" stroke-width="1.3"/><rect x="934.5" y="236" width="14" height="12.5" fill="none" stroke="#ccc" stroke-width="1.3"/><rect x="937" y="242.5" width="9" height="3" fill="#ccc"/><path d="M971.5 236 V249 M985.5 236 V249" stroke="#ddd" stroke-width="1.3" stroke-dasharray="2 1.5"/><rect x="974.5" y="240" width="8" height="2.5" fill="#ddd"/><path d="M974.5 245.5 H982.5" stroke="#ddd" stroke-width="1.3"/><rect x="1008" y="237" width="15" height="5" fill="#ddd"/><rect x="1008" y="244.5" width="15" height="3" fill="#ccc"/><path d="M1044 237.5 H1056" stroke="#ddd" stroke-width="1"/><rect x="1050" y="241" width="12" height="6.5" fill="#ccc"/></svg><div class="a" style="left:842.0px;top:268.0px;width:340.0px;height:1.0px;background:#e6e6e6"></div><div class="a" style="left:856.0px;top:284.0px;width:0;height:0;border-top:2.5px solid transparent;border-bottom:2.5px solid transparent;border-left:3.5px solid #666"></div><div class="a" style="left:863.5px;top:281.0px;white-space:nowrap;font-size:9px;letter-spacing:0.1px;color:#333">REPORT TASKS</div><div class="a" style="left:842.0px;top:302.5px;width:340.0px;height:1.0px;background:#e6e6e6"></div><div class="a" style="left:855.0px;top:319px;width:0;height:0;border-left:2.5px solid transparent;border-right:2.5px solid transparent;border-top:3.5px solid #666"></div><div class="a" style="left:863.0px;top:315.5px;white-space:nowrap;font-size:9px;letter-spacing:0.1px;color:#333">APPEARANCE</div><div class="a" style="left:1174.0px;top:285.0px;width:7.0px;height:255.0px;background:#d2d2d2"></div><div class="a" style="left:855.5px;top:348.0px;white-space:nowrap;font-size:9.5px;color:#333;letter-spacing:0.35px">Background Color</div><div class="a" style="left:979.5px;top:343.5px;width:156.5px;height:20.5px;background:#fff;border:1px solid #e8e8e8;border-radius:4px"></div><div class="a" style="left:991.5px;top:346.5px;width:14.0px;height:14.5px;background:#fff;border:1px solid #e0e0e0"></div><div class="a" style="left:1014.5px;top:348.0px;white-space:nowrap;font-size:9.5px;color:#222;letter-spacing:0.3px">rgba(0, 0, 0, 0)</div><div class="a" style="left:1121.5px;top:352.0px;width:0;height:0;border-left:4px solid transparent;border-right:4px solid transparent;border-top:4px solid #222"></div><div class="a" style="left:1144.0px;top:350.5px;width:8.0px;height:7.5px;background:#e9e9e9;border:1px solid #8a8a8a"></div><svg class="a" style="left:1159px;top:345.0px" width="11" height="13" viewBox="0 0 11 13"><path d="M1.5 12 C3.5 12.3 4 11 4.5 9 L5.5 4 C6 1.8 7 1 9.5 1.3" fill="none" stroke="#b3b3b3" stroke-width="1.5"/><path d="M3 6 H8" stroke="#b3b3b3" stroke-width="1.3"/></svg><div class="a" style="left:855.5px;top:381.0px;white-space:nowrap;font-size:9.5px;color:#333;letter-spacing:0.35px">Border Color</div><div class="a" style="left:979.5px;top:376.5px;width:156.5px;height:20.5px;background:#fff;border:1px solid #e8e8e8;border-radius:4px"></div><div class="a" style="left:991.5px;top:379.5px;width:14.0px;height:14.5px;background:#000;border:1px solid #e0e0e0"></div><div class="a" style="left:1014.5px;top:381.0px;white-space:nowrap;font-size:9.5px;color:#222;letter-spacing:0.3px">rgba(0, 0, 0, 1)</div><div class="a" style="left:1121.5px;top:385.0px;width:0;height:0;border-left:4px solid transparent;border-right:4px solid transparent;border-top:4px solid #222"></div><div class="a" style="left:1144.0px;top:383.5px;width:8.0px;height:7.5px;background:#e9e9e9;border:1px solid #8a8a8a"></div><svg class="a" style="left:1159px;top:378.0px" width="11" height="13" viewBox="0 0 11 13"><path d="M1.5 12 C3.5 12.3 4 11 4.5 9 L5.5 4 C6 1.8 7 1 9.5 1.3" fill="none" stroke="#b3b3b3" stroke-width="1.5"/><path d="M3 6 H8" stroke="#b3b3b3" stroke-width="1.3"/></svg><div class="a" style="left:855.5px;top:414.0px;white-space:nowrap;font-size:9.5px;color:#333;letter-spacing:0.35px">Border Dash Style</div><div class="a" style="left:979.5px;top:409.5px;width:156.5px;height:20.5px;background:#fff;border:1px solid #e8e8e8;border-radius:4px"></div><div class="a" style="left:987.0px;top:414.0px;white-space:nowrap;font-size:9.5px;color:#222;letter-spacing:0.3px">Solid</div><div class="a" style="left:1121.5px;top:418.0px;width:0;height:0;border-left:4px solid transparent;border-right:4px solid transparent;border-top:4px solid #222"></div><div class="a" style="left:1144.0px;top:416.5px;width:8.0px;height:7.5px;background:#e9e9e9;border:1px solid #8a8a8a"></div><svg class="a" style="left:1159px;top:411.0px" width="11" height="13" viewBox="0 0 11 13"><path d="M1.5 12 C3.5 12.3 4 11 4.5 9 L5.5 4 C6 1.8 7 1 9.5 1.3" fill="none" stroke="#b3b3b3" stroke-width="1.5"/><path d="M3 6 H8" stroke="#b3b3b3" stroke-width="1.3"/></svg><div class="a" style="left:855.5px;top:446.0px;white-space:nowrap;font-size:9.5px;color:#333;letter-spacing:0.35px">Border Width</div><div class="a" style="left:979.5px;top:441.5px;width:156.5px;height:20.5px;background:#fff;border:1px solid #e8e8e8;border-radius:4px"></div><div class="a" style="left:987.0px;top:446.0px;white-space:nowrap;font-size:9.5px;color:#222;letter-spacing:0.3px">1</div><div class="a" style="left:1121.5px;top:446.0px;width:0;height:0;border-left:4px solid transparent;border-right:4px solid transparent;border-bottom:4px solid #222"></div><div class="a" style="left:1121.5px;top:454.0px;width:0;height:0;border-left:4px solid transparent;border-right:4px solid transparent;border-top:4px solid #222"></div><div class="a" style="left:1144.0px;top:448.5px;width:8.0px;height:7.5px;background:#e9e9e9;border:1px solid #8a8a8a"></div><svg class="a" style="left:1159px;top:443.0px" width="11" height="13" viewBox="0 0 11 13"><path d="M1.5 12 C3.5 12.3 4 11 4.5 9 L5.5 4 C6 1.8 7 1 9.5 1.3" fill="none" stroke="#b3b3b3" stroke-width="1.5"/><path d="M3 6 H8" stroke="#b3b3b3" stroke-width="1.3"/></svg><div class="a" style="left:855.5px;top:478.5px;white-space:nowrap;font-size:9.5px;color:#333;letter-spacing:0.35px">Borders</div><div class="a" style="left:979.5px;top:473.5px;width:21.0px;height:21.5px;background:#a8a8a8"></div><svg class="a" style="left:979px;top:473px" width="150" height="22" viewBox="979 473 150 22" fill="none" stroke-width="1.2"><rect x="985.5" y="480" width="9" height="9" stroke="#fff" stroke-dasharray="1.5 1"/><rect x="1008" y="480" width="8.5" height="9" stroke="#444"/><rect x="1048" y="480" width="8.5" height="9" stroke="#444" stroke-dasharray="1.5 1"/><rect x="1070" y="480" width="8.5" height="9" stroke="#444" stroke-dasharray="1.5 1"/><rect x="1092.5" y="480" width="8.5" height="9" stroke="#444" stroke-dasharray="1.5 1"/><rect x="1115" y="480" width="8.5" height="9" stroke="#444" stroke-dasharray="1.5 1"/></svg><div class="a" style="left:1144.0px;top:481.0px;width:8.0px;height:7.5px;background:#e9e9e9;border:1px solid #8a8a8a"></div><svg class="a" style="left:1159px;top:475.5px" width="11" height="13" viewBox="0 0 11 13"><path d="M1.5 12 C3.5 12.3 4 11 4.5 9 L5.5 4 C6 1.8 7 1 9.5 1.3" fill="none" stroke="#b3b3b3" stroke-width="1.5"/><path d="M3 6 H8" stroke="#b3b3b3" stroke-width="1.3"/></svg><div class="a" style="left:857.5px;top:517px;width:0;height:0;border-left:2.5px solid transparent;border-right:2.5px solid transparent;border-top:3.5px solid #666"></div><div class="a" style="left:868.0px;top:513.5px;white-space:nowrap;font-size:9px;letter-spacing:0.1px;color:#333">FONT</div><div class="a" style="left:1144.0px;top:516.0px;width:8.0px;height:7.5px;background:#e9e9e9;border:1px solid #8a8a8a"></div><svg class="a" style="left:1159px;top:510.5px" width="11" height="13" viewBox="0 0 11 13"><path d="M1.5 12 C3.5 12.3 4 11 4.5 9 L5.5 4 C6 1.8 7 1 9.5 1.3" fill="none" stroke="#b3b3b3" stroke-width="1.5"/><path d="M3 6 H8" stroke="#b3b3b3" stroke-width="1.3"/></svg><div class="a" style="left:872.0px;top:546.5px;white-space:nowrap;font-size:9.5px;color:#333;letter-spacing:0.35px">Font Name</div><div class="a" style="left:979.5px;top:542.0px;width:156.5px;height:20.5px;background:#fff;border:1px solid #e8e8e8;border-radius:4px"></div><div class="a" style="left:987.0px;top:546.5px;white-space:nowrap;font-size:9.5px;color:#222;letter-spacing:0.3px">Tahoma</div><div class="a" style="left:1121.5px;top:550.5px;width:0;height:0;border-left:4px solid transparent;border-right:4px solid transparent;border-top:4px solid #222"></div><div class="a" style="left:872.0px;top:579.5px;white-space:nowrap;font-size:9.5px;color:#333;letter-spacing:0.35px">Size</div><div class="a" style="left:979.5px;top:575.0px;width:156.5px;height:20.5px;background:#fff;border:1px solid #e8e8e8;border-radius:4px"></div><div class="a" style="left:987.0px;top:579.5px;white-space:nowrap;font-size:9.5px;color:#222;letter-spacing:0.3px">8</div><div class="a" style="left:1121.5px;top:579.5px;width:0;height:0;border-left:4px solid transparent;border-right:4px solid transparent;border-bottom:4px solid #222"></div><div class="a" style="left:1121.5px;top:587.5px;width:0;height:0;border-left:4px solid transparent;border-right:4px solid transparent;border-top:4px solid #222"></div><div class="a" style="left:872.0px;top:612.0px;white-space:nowrap;font-size:9.5px;color:#333;letter-spacing:0.35px">Unit</div><div class="a" style="left:979.5px;top:607.5px;width:156.5px;height:20.5px;background:#fff;border:1px solid #e8e8e8;border-radius:4px"></div><div class="a" style="left:987.0px;top:612.0px;white-space:nowrap;font-size:9.5px;color:#222;letter-spacing:0.3px">Point</div><div class="a" style="left:1121.5px;top:616.0px;width:0;height:0;border-left:4px solid transparent;border-right:4px solid transparent;border-top:4px solid #222"></div><div class="a" style="left:842.5px;top:537.5px;width:331.5px;height:30.5px;border:2px solid #ff1a1a"></div><div class="a" style="left:985px;top:644.5px;font-family:'Liberation Serif',serif;font-size:10.5px;color:#777;white-space:nowrap">B</div><div class="a" style="left:1010px;top:644.5px;font-family:'Liberation Serif',serif;font-size:10.5px;color:#777;font-style:italic">I</div><div class="a" style="left:1032px;top:644.5px;font-family:'Liberation Serif',serif;font-size:10.5px;color:#777;text-decoration:underline">U</div><div class="a" style="left:1057px;top:644.5px;font-family:'Liberation Serif',serif;font-size:10.5px;color:#777;text-decoration:line-through">S</div><div class="a" style="left:855.5px;top:679.0px;white-space:nowrap;font-size:9.5px;color:#333;letter-spacing:0.35px">Foreground Color</div><div class="a" style="left:979.5px;top:674.5px;width:156.5px;height:20.5px;background:#fff;border:1px solid #e8e8e8;border-radius:4px"></div><div class="a" style="left:991.5px;top:677.5px;width:14.0px;height:14.5px;background:#000;border:1px solid #e0e0e0"></div><div class="a" style="left:1014.5px;top:679.0px;white-space:nowrap;font-size:9.5px;color:#222;letter-spacing:0.3px">rgba(0, 0, 0, 1)</div><div class="a" style="left:1121.5px;top:683.0px;width:0;height:0;border-left:4px solid transparent;border-right:4px solid transparent;border-top:4px solid #222"></div><div class="a" style="left:1144.0px;top:681.5px;width:8.0px;height:7.5px;background:#e9e9e9;border:1px solid #8a8a8a"></div><svg class="a" style="left:1159px;top:676.0px" width="11" height="13" viewBox="0 0 11 13"><path d="M1.5 12 C3.5 12.3 4 11 4.5 9 L5.5 4 C6 1.8 7 1 9.5 1.3" fill="none" stroke="#b3b3b3" stroke-width="1.5"/><path d="M3 6 H8" stroke="#b3b3b3" stroke-width="1.3"/></svg><div class="a" style="left:857.5px;top:714.0px;width:0;height:0;border-top:2.5px solid transparent;border-bottom:2.5px solid transparent;border-left:3.5px solid #666"></div><div class="a" style="left:868.0px;top:710.5px;white-space:nowrap;font-size:9px;letter-spacing:0.1px;color:#333">PADDING</div><div class="a" style="left:1144.0px;top:713.0px;width:8.0px;height:7.5px;background:#e9e9e9;border:1px solid #8a8a8a"></div><svg class="a" style="left:1159px;top:707.5px" width="11" height="13" viewBox="0 0 11 13"><path d="M1.5 12 C3.5 12.3 4 11 4.5 9 L5.5 4 C6 1.8 7 1 9.5 1.3" fill="none" stroke="#b3b3b3" stroke-width="1.5"/><path d="M3 6 H8" stroke="#b3b3b3" stroke-width="1.3"/></svg></div></div>
  <div id="side" class="a"><div class="a" style="left:0;top:0;width:42px;height:41.5px;background:#505050"></div>
<svg class="a" style="left:12px;top:12px" width="18" height="18" viewBox="0 0 18 18"><g fill="#fff"><circle cx="9" cy="9" r="5.9"/><g id="tth"><rect x="7.5" y="0.8" width="3" height="4" rx="0.6"/></g><use href="#tth" transform="rotate(45 9 9)"/><use href="#tth" transform="rotate(90 9 9)"/><use href="#tth" transform="rotate(135 9 9)"/><use href="#tth" transform="rotate(180 9 9)"/><use href="#tth" transform="rotate(225 9 9)"/><use href="#tth" transform="rotate(270 9 9)"/><use href="#tth" transform="rotate(315 9 9)"/></g><circle cx="9" cy="9" r="3" fill="#505050"/><circle cx="9" cy="9" r="1.3" fill="#fff"/></svg>
<svg class="a" style="left:12px;top:52px" width="18" height="20" viewBox="0 0 18 20"><path d="M3 18.5 C5.5 19 6.5 17.5 7.2 14 L8.8 6 C9.5 2.5 11 1 14.5 1.8" fill="none" stroke="#fff" stroke-width="1.7"/><path d="M5 9.2 H12.5" stroke="#fff" stroke-width="1.5"/></svg>
<svg class="a" style="left:14px;top:93px" width="14" height="18" viewBox="0 0 14 18"><path d="M0.5 3 C0.5 -0.5 13.5 -0.5 13.5 3 V14.5 C13.5 18 0.5 18 0.5 14.5 Z" fill="#fff"/><ellipse cx="7" cy="3.2" rx="5" ry="1.5" fill="#606060"/></svg>
<svg class="a" style="left:11px;top:135px" width="20" height="20" viewBox="0 0 20 20" fill="none" stroke="#fff" stroke-width="1.6"><rect x="6.5" y="1" width="7" height="5.5"/><rect x="1" y="13.5" width="7" height="5.5"/><rect x="12" y="13.5" width="7" height="5.5"/><path d="M10 6.5 V10 M4.5 13.5 V10 H15.5 V13.5"/></svg>
</div>
</div>
</body></html>
